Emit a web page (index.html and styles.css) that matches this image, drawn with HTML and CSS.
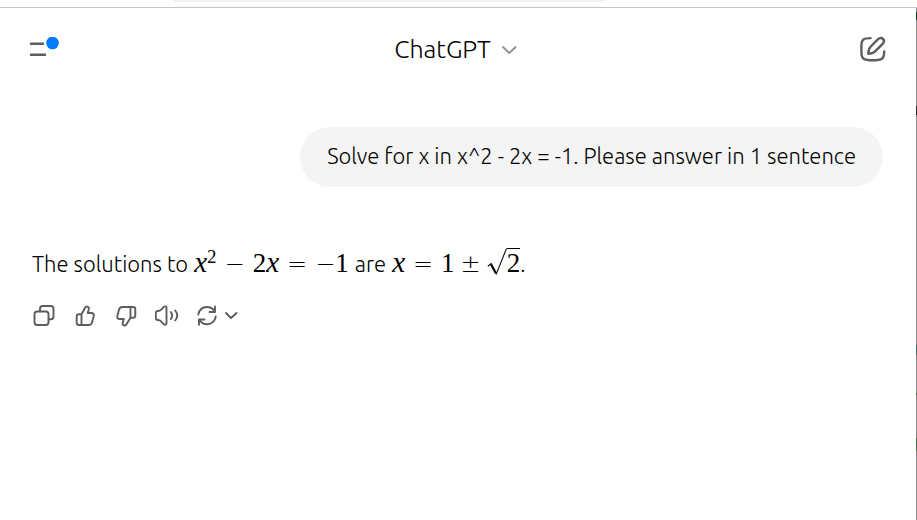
FILE: index.html
```html
<!DOCTYPE html>
<html lang="en">
<head>
<meta charset="utf-8">
<meta name="viewport" content="width=device-width, initial-scale=1">
<title>ChatGPT</title>
<link rel="stylesheet" href="styles.css">
</head>
<body>
<div class="browser-edge"><div class="tab-edge"></div></div>
<div class="app">
  <header class="topbar">
    <button class="icon-button menu" aria-label="Open menu">
      <svg width="30" height="24" viewBox="0 0 30 24" fill="none"><path d="M2 6.700h12M2 17.700h14" stroke="#5d5d5d" stroke-width="2.5" stroke-linecap="round"/><circle cx="23.5" cy="6" r="6.3" fill="#007aff"/></svg>
    </button>
    <button class="model">ChatGPT
      <svg width="16" height="10" viewBox="0 0 16 10" fill="none" stroke="#8f8f8f" stroke-width="1.8" stroke-linecap="round" stroke-linejoin="round"><path d="M2 3l6.3 6 6.3-6"/></svg>
    </button>
    <button class="icon-button compose" aria-label="New chat">
      <svg width="28" height="28" viewBox="0 0 28 28" fill="none" stroke="#5d5d5d" stroke-width="2.4" stroke-linecap="round" stroke-linejoin="round"><path d="M11.5 3.1C5 3.1 2.4 4 2.4 11v6c0 7 2.2 8.300 11.300 8.300S25.200 24 25.200 16.500"/><path d="M9.300 18.700c0-3.700.5-5.200 2.500-7.200l7.300-7.300c1.600-1.600 3.700-1.500 4.900-.3s1.300 3.200-.3 4.900l-7.300 7.300c-2 2-3.500 2.600-7.100 2.600z"/></svg>
    </button>
  </header>
  <main class="thread">
    <p class="prompt">Solve for x in x^2 - 2x = -1. Please answer in 1 sentence</p>
    <section class="reply">
      <p class="answer">
        <span>The solutions to</span>
        <span class="math"><span><i>x</i><sup>2</sup></span><span class="op">−</span><span>2<i>x</i></span><span class="op">=</span><span><span class="op">−</span>1</span></span>
        <span>are</span>
        <span class="math"><i>x</i><span class="op">=</span><span class="sum"><span>1</span><span class="op">±</span><span class="root"><svg width="20" height="27" viewBox="0 0 20 27" aria-label="square root" fill="none"><path d="M.8 18.200l3.400-2.700 5.200 10.200L19.500.5" stroke="#0d0d0d" stroke-width="1.100"/><path d="M3.800 16l5.200 9.500" stroke="#0d0d0d" stroke-width="2.200"/></svg><span class="radicand">2</span></span></span></span><span class="stop">.</span>
      </p>
      <div class="actions">
        <button class="icon-button" aria-label="Copy"><svg width="24" height="24" viewBox="0 0 24 24"><rect x="2.500" y="7.500" width="14" height="13.500" rx="2.700"/><path d="M8 7V4.700C8 3 9 2 10.700 2h8.100c1.700 0 2.700 1 2.700 2.700v7.800c0 1.700-1 2.700-2.700 2.700h-2"/></svg></button>
        <button class="icon-button" aria-label="Good response"><svg width="24" height="24" viewBox="0 0 24 24"><path d="M8.500 10.200l3.700-6.700c.6-1 1.400-1.300 2.300-.9 1.200.5 1.600 1.500 1.300 2.700L14.700 9h3.800c1.800 0 2.700 1.200 2.300 2.900l-1.600 6.200c-.5 1.900-1.600 2.900-3.500 2.900H8.500zM8.500 10.200H6c-1.500 0-2.300.8-2.300 2.300v6.200C3.700 20.200 4.500 21 6 21h2.500"/></svg></button>
        <button class="icon-button" aria-label="Bad response"><svg class="flip" width="24" height="24" viewBox="0 0 24 24"><path d="M7.500 10.200l4.200-6.700c.6-1 1.400-1.300 2.300-.9 1.200.5 1.600 1.500 1.300 2.700L14.200 9h4.300c1.700 0 2.600 1.200 2.200 2.900l-1.600 6.200c-.5 1.900-1.600 2.900-3.500 2.900H7.500zM7.500 10.200H5c-1.500 0-2.300.8-2.300 2.300v6.200C2.700 20.200 3.500 21 5 21h2.500"/></svg></button>
        <button class="icon-button" aria-label="Read aloud"><svg width="24" height="24" viewBox="0 0 24 24"><path d="M.8 9.300c0-1.500.7-2.300 2-2.300 1.500 0 2.600-.5 3.700-1.700l2.300-2.400c1-1 2.700-.6 2.700.9v15.500c0 1.500-1.700 1.900-2.700.9l-2.300-2.400C5.400 16.500 4.300 16 2.800 16c-1.300 0-2-.8-2-2.300zM15.800 8c1.500 2 1.500 5 0 7M20.200 6.500c2.500 3 2.500 7 0 10"/></svg></button>
        <button class="icon-button retry" aria-label="Try again"><svg width="42" height="24" viewBox="0 0 42 24"><path d="M2.300 10.500C3.300 6 6.500 3 11 3c3.500 0 6.300 2 7.700 4.500M19 2.500V8h-5.500M19.800 12.500c-.8 4.500-4.200 7.700-8.700 7.700-3.500 0-6.200-1.800-7.700-4.500M3 20.700v-5.200h5.500M30 9l5 5 5.500-5"/></svg></button>
      </div>
    </section>
  </main>
</div>
</body>
</html>
```
FILE: styles.css
```css
* { box-sizing: border-box; }
body {
  margin: 0;
  background: #fff;
  color: #000;
  font: 300 22px/32px Ubuntu, "Noto Sans", sans-serif;
}
p { margin: 0; }
button {
  padding: 0;
  border: 0;
  background: none;
  color: inherit;
  font: inherit;
}
svg { display: block; flex: none; }
.browser-edge {
  height: 8px;
  border-bottom: 1px solid #c4c4c4;
}
.tab-edge {
  width: 47%;
  height: 2px;
  margin-left: 19%;
  border-radius: 0 0 4px 4px;
  background: #f1f1f1;
}
.app {
  min-height: calc(100vh - 8px);
  border-right: 1px solid #8b8b8b;
  border-image: linear-gradient(#8b8b8b 5px, #064d27 5px 13px, #8b8b8b 13px 99px, #222 99px 108px, #8b8b8b 108px 337px, #3e6b62 337px 347px, #8b8b8b 347px 384px, #45704c 384px 386px, #8b8b8b 386px 429px, #45704c 429px 442px, #8b8b8b 442px) 1;
}
.topbar {
  display: grid;
  grid-template-columns: 1fr auto 1fr;
  align-items: center;
  padding: 25px 29px 0 29px;
}
.icon-button { display: flex; }
.compose { justify-self: end; }
.model {
  display: flex;
  align-items: center;
  gap: 10px;
  padding-right: 5px;
  font-size: 25px;
}
.thread {
  display: flex;
  flex-direction: column;
  padding: 62px 33px 0 32px;
}
.prompt {
  align-self: flex-end;
  padding: 13px 27px 15px;
  border-radius: 30px;
  background: #f4f4f4;
}
.reply { margin-top: 60px; }
.answer {
  display: flex;
  align-items: baseline;
  gap: 6px;
  height: 36px;
}
.math {
  display: flex;
  align-items: baseline;
  gap: 8px;
  font-family: "Liberation Serif", serif;
  font-size: 27px;
  font-weight: 400;
}
.math i { font-size: 29px; line-height: 0; }
.math sup {
  font-size: 19px;
  line-height: 0;
  vertical-align: 9px;
}
.op {
  font-family: "DejaVu Sans", sans-serif;
  font-size: 24px;
  font-weight: 200;
  line-height: 0;
}
.sum { display: flex; align-items: baseline; gap: 6px; }
.root { display: flex; align-items: baseline; }
.root svg { align-self: flex-start; }
.radicand { border-top: 1px solid; line-height: 28px; }
.stop { margin-left: -6px; }
.actions {
  display: flex;
  gap: 17px;
  margin-top: 21px;
}
.actions svg {
  fill: none;
  stroke: #5d5d5d;
  stroke-width: 1.9;
  stroke-linecap: round;
  stroke-linejoin: round;
}
.flip { transform: rotate(180deg); }
```
